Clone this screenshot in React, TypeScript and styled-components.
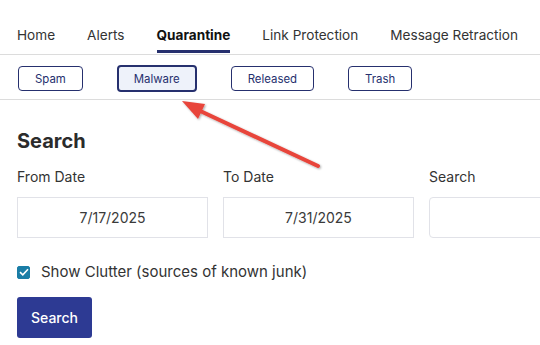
import { FC, useState } from 'react'

import styled, { createGlobalStyle } from 'styled-components'

const GlobalStyle = createGlobalStyle`
	html, body {
		margin: 0;
		padding: 0;
		background: #ffffff;
		font-family: Inter, 'Noto Sans', sans-serif;
		color: #333333;
	}
	* {
		box-sizing: border-box;
	}
`

const tabs = ['Home', 'Alerts', 'Quarantine', 'Link Protection', 'Message Retraction']
const folders = ['Spam', 'Malware', 'Released', 'Trash']

const App: FC = () => {
	const [clutter, setClutter] = useState(true)

	return (
		<Page>
			<GlobalStyle />
			<TabBar>
				{tabs.map((tab) => (
					<Tab key={tab} $active={tab === 'Quarantine'}>
						{tab}
					</Tab>
				))}
			</TabBar>
			<FolderBar>
				{folders.map((folder) => (
					<FolderButton key={folder} $active={folder === 'Malware'}>
						{folder}
					</FolderButton>
				))}
			</FolderBar>
			<SearchSection>
				<Heading>Search</Heading>
				<FieldGrid>
					<Field>
						<Label>From Date</Label>
						<Input readOnly value='7/17/2025' />
					</Field>
					<Field>
						<Label>To Date</Label>
						<Input readOnly value='7/31/2025' />
					</Field>
					<Field>
						<Label>Search</Label>
						<Input $rounded readOnly value='' />
					</Field>
				</FieldGrid>
				<CheckRow onClick={() => setClutter(!clutter)}>
					<CheckBox $checked={clutter}>
						{clutter && (
							<svg width='10' height='8' viewBox='0 0 10 8'>
								<path
									d='M1 4.2 L3.8 6.8 L9 1.2'
									fill='none'
									stroke='#ffffff'
									strokeWidth='1.6'
								/>
							</svg>
						)}
					</CheckBox>
					<CheckText>Show Clutter (sources of known junk)</CheckText>
				</CheckRow>
				<PrimaryButton>Search</PrimaryButton>
			</SearchSection>
			<Annotation width='540' height='345' viewBox='0 0 540 345'>
				<defs>
					<filter id='shadow' x='-10%' y='-10%' width='120%' height='120%'>
						<feDropShadow dx='1' dy='1' stdDeviation='0.8' floodColor='#000' floodOpacity='0.35' />
					</filter>
				</defs>
				<g filter='url(#shadow)'>
					<line x1='318' y1='166' x2='196' y2='109' stroke='#e8443a' strokeWidth='4' strokeLinecap='round' />
					<polygon points='182,101 205,104 198,119' fill='#e8443a' />
				</g>
			</Annotation>
		</Page>
	)
}

const Page = styled.div`
	position: relative;
	width: 540px;
	height: 345px;
	overflow: hidden;
`

const TabBar = styled.nav`
	display: flex;
	gap: 32px;
	padding: 0 17px;
	height: 55px;
	align-items: flex-end;
	border-bottom: 1px solid #dcdcdc;
`

const Tab = styled.div<{ $active?: boolean }>`
	font-size: 13.6px;
	line-height: 17px;
	padding-bottom: 6px;
	margin-bottom: 1px;
	white-space: nowrap;
	color: ${({ $active }) => ($active ? '#111111' : '#333333')};
	font-weight: ${({ $active }) => ($active ? 700 : 400)};
	border-bottom: 3px solid ${({ $active }) => ($active ? '#26306e' : 'transparent')};
`

const FolderBar = styled.div`
	display: flex;
	gap: 34px;
	padding: 11px 18px 0;
	height: 45px;
	border-bottom: 1px solid #dcdcdc;
`

const FolderButton = styled.button<{ $active?: boolean }>`
	height: ${({ $active }) => ($active ? '27px' : '25px')};
	margin-top: ${({ $active }) => ($active ? '-1px' : '0')};
	padding: 0 ${({ $active }) => ($active ? '15px' : '16px')};
	font-family: inherit;
	font-size: 11.4px;
	color: #26306e;
	background: ${({ $active }) => ($active ? '#eef2fa' : '#ffffff')};
	border: ${({ $active }) => ($active ? '2px' : '1px')} solid #26306e;
	border-radius: 4px;
`

const SearchSection = styled.section`
	padding: 29px 17px 0;
`

const Heading = styled.h2`
	margin: 0;
	font-size: 20px;
	line-height: 24px;
	font-weight: 700;
	color: #2b2b2b;
`

const FieldGrid = styled.div`
	display: grid;
	grid-template-columns: 191px 191px 191px;
	gap: 15px;
	margin-top: 15px;
`

const Field = styled.div`
	display: flex;
	flex-direction: column;
`

const Label = styled.label`
	font-size: 14px;
	line-height: 17px;
	color: #333333;
	margin-bottom: 12px;
`

const Input = styled.input<{ $rounded?: boolean }>`
	height: 41px;
	width: 100%;
	border: 1px solid #e1e2e8;
	border-radius: ${({ $rounded }) => ($rounded ? '4px' : '0')};
	font-family: inherit;
	font-size: 14px;
	text-align: center;
	color: #3a3a3a;
	outline: none;
`

const CheckRow = styled.div`
	display: flex;
	align-items: center;
	gap: 11px;
	margin-top: 25px;
	cursor: pointer;
`

const CheckBox = styled.span<{ $checked?: boolean }>`
	width: 13px;
	height: 13px;
	display: flex;
	align-items: center;
	justify-content: center;
	background: ${({ $checked }) => ($checked ? '#1a7da6' : '#ffffff')};
	border: 1px solid #1a7da6;
	border-radius: 2px;
`

const CheckText = styled.span`
	font-size: 15px;
	line-height: 18px;
	color: #333333;
`

const PrimaryButton = styled.button`
	display: block;
	margin-top: 16px;
	width: 75px;
	height: 41px;
	border: none;
	border-radius: 3px;
	background: #2d3a93;
	color: #ffffff;
	font-family: inherit;
	font-size: 14px;
	font-weight: 500;
`

const Annotation = styled.svg`
	position: absolute;
	top: 0;
	left: 0;
	pointer-events: none;
`

export default App
